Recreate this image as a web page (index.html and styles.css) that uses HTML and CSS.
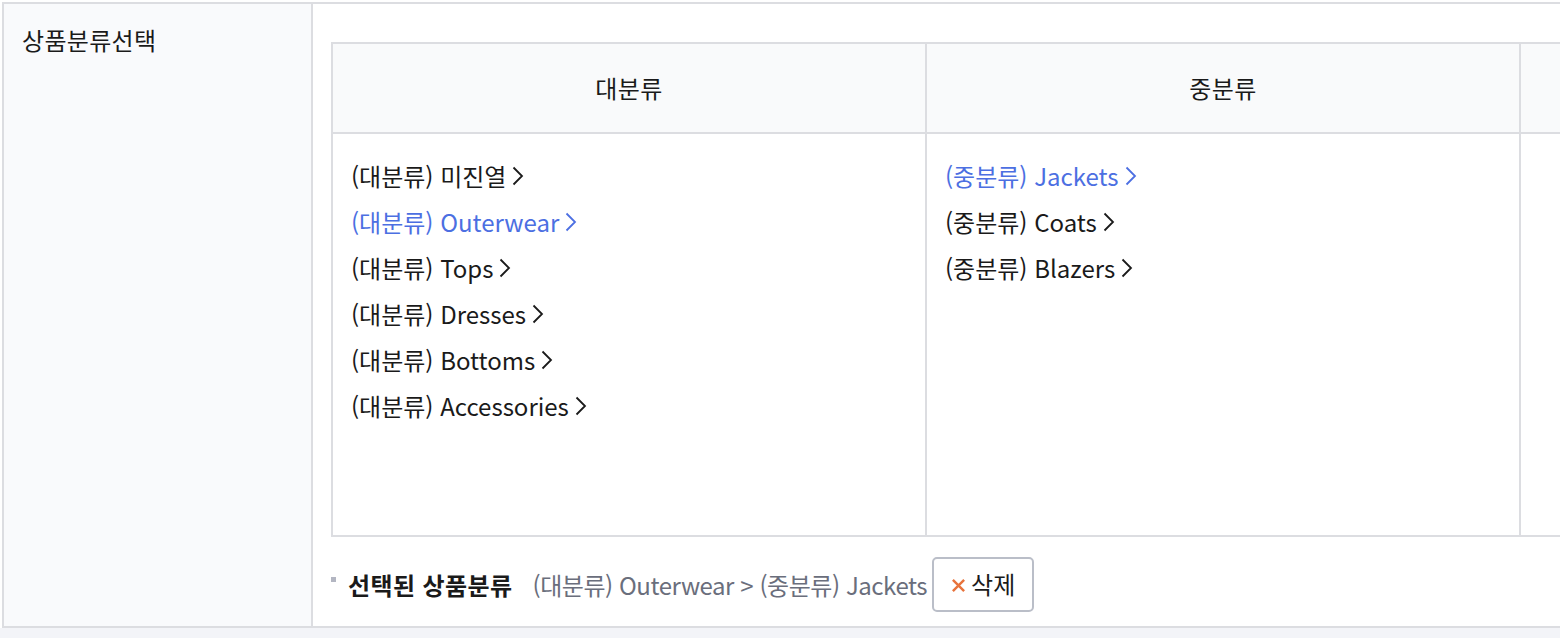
FILE: index.html
```html
<!DOCTYPE html>
<html lang="ko">
<head>
<meta charset="utf-8">
<title>상품분류선택</title>
<link rel="stylesheet" href="styles.css">
</head>
<body>
<div class="wrap">
  <div class="row">
    <div class="label">상품분류선택</div>
    <div class="content">
      <div class="cats">
        <div class="head">대분류</div>
        <div class="head">중분류</div>
        <div class="head"></div>
        <ul class="list">
          <li>(대분류) 미진열<svg class="chev" viewBox="0 0 12 20"><path d="M1.5 1.5 L10 10 L1.5 18.5"/></svg></li>
          <li class="on">(대분류) Outerwear<svg class="chev" viewBox="0 0 12 20"><path d="M1.5 1.5 L10 10 L1.5 18.5"/></svg></li>
          <li>(대분류) Tops<svg class="chev" viewBox="0 0 12 20"><path d="M1.5 1.5 L10 10 L1.5 18.5"/></svg></li>
          <li>(대분류) Dresses<svg class="chev" viewBox="0 0 12 20"><path d="M1.5 1.5 L10 10 L1.5 18.5"/></svg></li>
          <li>(대분류) Bottoms<svg class="chev" viewBox="0 0 12 20"><path d="M1.5 1.5 L10 10 L1.5 18.5"/></svg></li>
          <li>(대분류) Accessories<svg class="chev" viewBox="0 0 12 20"><path d="M1.5 1.5 L10 10 L1.5 18.5"/></svg></li>
        </ul>
        <ul class="list">
          <li class="on">(중분류) Jackets<svg class="chev" viewBox="0 0 12 20"><path d="M1.5 1.5 L10 10 L1.5 18.5"/></svg></li>
          <li>(중분류) Coats<svg class="chev" viewBox="0 0 12 20"><path d="M1.5 1.5 L10 10 L1.5 18.5"/></svg></li>
          <li>(중분류) Blazers<svg class="chev" viewBox="0 0 12 20"><path d="M1.5 1.5 L10 10 L1.5 18.5"/></svg></li>
        </ul>
        <ul class="list"></ul>
      </div>
      <div class="selected">
        <span class="bullet"></span>
        <strong class="sel-title">선택된 상품분류</strong>
        <span class="sel-path">(대분류) Outerwear &gt; (중분류) Jackets</span>
        <button class="del" type="button"><svg class="x" viewBox="0 0 16 16"><path d="M2 2 L14 14 M14 2 L2 14"/></svg>삭제</button>
      </div>
    </div>
  </div>
</div>
</body>
</html>
```

FILE: styles.css
```css
* { box-sizing: border-box; }
html, body {
  margin: 0;
  padding: 0;
  background: #f3f4f8;
  font-family: "Noto Sans CJK KR", "Noto Sans", sans-serif;
  color: #1a1a1a;
}
.wrap {
  background: #fff;
  padding: 2px 0 0 2px;
  width: 1560px;
  overflow: hidden;
}
.row {
  display: flex;
  border-top: 2px solid #dcdde1;
  border-left: 2px solid #dcdde1;
  border-bottom: 2px solid #dcdde1;
  height: 626px;
}
.label {
  flex: 0 0 309px;
  background: #f9fafc;
  border-right: 2px solid #dcdde1;
  padding: 21px 0 0 18px;
  font-size: 24px;
  line-height: 30px;
  letter-spacing: 0.3px;
}
.content {
  flex: 1 1 auto;
  min-width: 0;
  overflow: hidden;
  background: #fff;
  padding: 38px 0 0 18px;
}
.cats {
  display: grid;
  grid-template-columns: repeat(3, 594px);
  width: max-content;
  border-top: 2px solid #dcdde1;
  border-left: 2px solid #dcdde1;
}
.head {
  height: 90px;
  background: #f9fafb;
  border-right: 2px solid #dcdde1;
  border-bottom: 2px solid #dcdde1;
  display: flex;
  align-items: center;
  justify-content: center;
  font-size: 24px;
  letter-spacing: 0.5px;
  padding-bottom: 2px;
}
.list {
  list-style: none;
  margin: 0;
  height: 403px;
  padding: 19px 0 0 18px;
  border-right: 2px solid #dcdde1;
  border-bottom: 2px solid #dcdde1;
  font-size: 24px;
  line-height: 46px;
}
.list li {
  display: flex;
  align-items: center;
  height: 46px;
  white-space: nowrap;
}
.list li.on { color: #4c6fe2; }
.chev {
  width: 12px;
  height: 20px;
  margin-left: 6px;
  fill: none;
  stroke: currentColor;
  stroke-width: 1.8;
}
.selected {
  display: flex;
  align-items: center;
  margin-top: 20px;
  height: 55px;
  white-space: nowrap;
}
.bullet {
  width: 5px;
  height: 5px;
  background: #b3b6c2;
  margin-right: 12px;
  margin-top: -10px;
}
.sel-title {
  font-size: 24px;
  font-weight: 700;
  letter-spacing: 0.4px;
  margin-right: 20px;
}
.sel-path {
  font-size: 24px;
  color: #6a6e7c;
  letter-spacing: -0.45px;
  margin-right: 5px;
}
.del {
  height: 55px;
  width: 102px;
  border: 2px solid #babec8;
  border-radius: 5px;
  background: #fff;
  font-family: inherit;
  font-size: 24px;
  color: #1a1a1a;
  display: flex;
  align-items: center;
  justify-content: center;
  padding: 0 0 2px 0;
}
.x {
  width: 15px;
  height: 15px;
  flex: 0 0 15px;
  margin-right: 5px;
  margin-top: 3px;
  fill: none;
  stroke: #e8733c;
  stroke-width: 2.6;
}
```
